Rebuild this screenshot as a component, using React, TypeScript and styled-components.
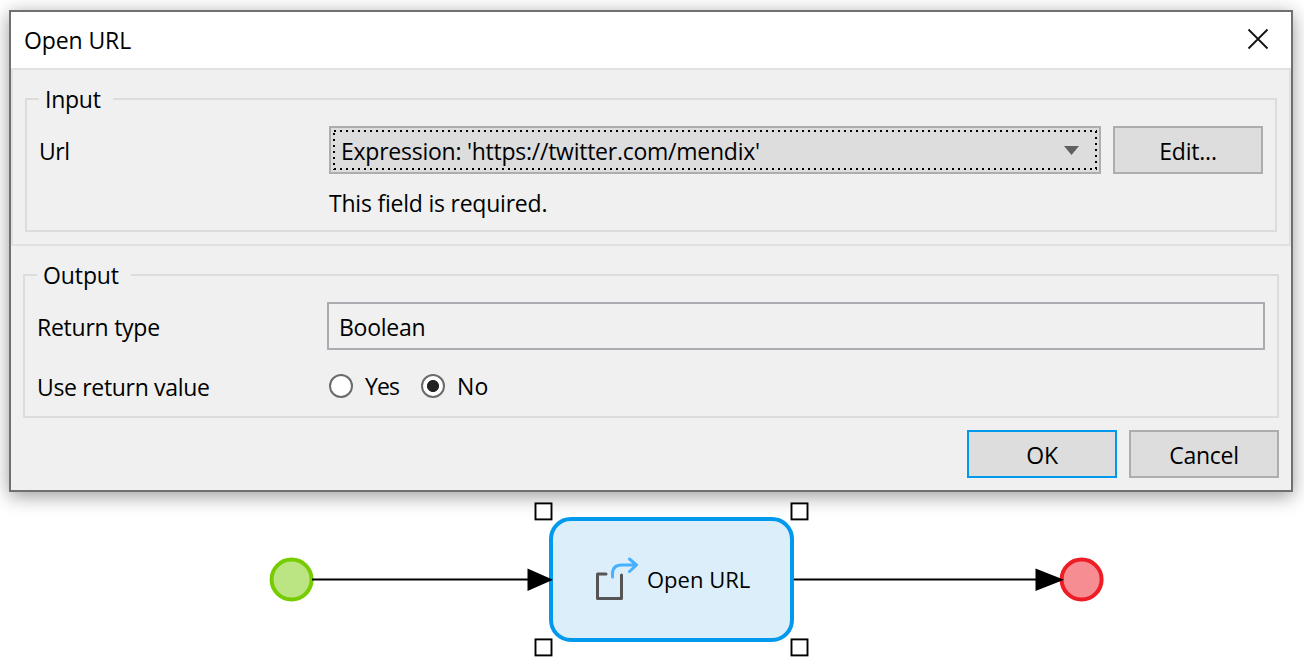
import React from 'react';
import styled, { createGlobalStyle } from 'styled-components';

const GlobalStyle = createGlobalStyle`
  *, *::before, *::after { box-sizing: border-box; }
  body { margin: 0; background: #fff; overflow: hidden; }
`;

const Page = styled.main`
  width: 1304px;
  height: 670px;
  padding-top: 10px;
  display: flex;
  flex-direction: column;
  color: #000;
  font-family: 'Open Sans', 'Segoe UI', sans-serif;
  font-size: 23px;
  line-height: 32px;
`;

const Text = styled.span<{ $track?: number }>`
  white-space: nowrap;
  letter-spacing: ${(p) => p.$track ?? -0.25}px;
`;

const Dialog = styled.section`
  width: 1284px;
  height: 482px;
  flex: none;
  margin-left: 9px;
  border: 2px solid #707070;
  background: #f0f0f0;
  box-shadow: 0 4px 18px rgba(0, 0, 0, 0.4);
`;

const TitleBar = styled.header`
  height: 56px;
  padding: 0 22px 0 13px;
  display: flex;
  align-items: center;
  justify-content: space-between;
  background: #fff;
`;

const CloseButton = styled.button`
  width: 22px;
  height: 22px;
  padding: 0;
  margin-bottom: 2px;
  border: 0;
  background: none;
  display: flex;
`;

const InputSection = styled.div`
  height: 178px;
  padding: 28px 12px 0;
  border: 2px solid #e1e1e1;
`;

const OutputSection = styled.div`
  padding: 28px 12px 0;
`;

const Group = styled.div<{ $height: number }>`
  height: ${(p) => p.$height}px;
  padding: 0 12px;
  border: 2px solid #dcdcdc;
  border-top: 0;
`;

const GroupHeader = styled.div`
  height: 28px;
  margin: 0 -12px;
  display: flex;
  align-items: flex-start;
`;

const Rule = styled.div<{ $width?: number }>`
  height: 2px;
  background: #dcdcdc;
  flex: ${(p) => (p.$width ? `0 0 ${p.$width}px` : '1')};
`;

const Legend = styled.div<{ $width: number }>`
  width: ${(p) => p.$width}px;
  padding-left: 6px;
  margin-top: -15px;
`;

const Row = styled.div<{ $gap?: number }>`
  height: 48px;
  margin-bottom: ${(p) => p.$gap ?? 0}px;
  display: flex;
  align-items: center;
`;

const Label = styled.div`
  width: 290px;
  flex: none;
  padding-top: 2px;
`;

const Button = styled.button<{ $primary?: boolean }>`
  width: 150px;
  height: 48px;
  padding: 2px 0 0;
  flex: none;
  border: 2px solid ${(p) => (p.$primary ? '#0099ee' : '#adadad')};
  background: #ddd;
  color: inherit;
  font: inherit;
`;

const dots = (dir: string, start: number) =>
  `repeating-linear-gradient(${dir}, transparent 0 ${start}px, #000 ${start}px ${start + 2}px, transparent ${start + 2}px 6px)`;

const Dropdown = styled.div`
  width: 772px;
  height: 48px;
  margin-right: 12px;
  padding: 2px;
  border: 2px solid #adadad;
  background: #ddd;
`;

const FocusFrame = styled.div`
  height: 40px;
  padding: 2px 18px 0 8px;
  display: flex;
  align-items: center;
  justify-content: space-between;
  background:
    ${dots('to right', 1)} 0 0 / 100% 2px no-repeat,
    ${dots('to right', 1)} 0 100% / 100% 2px no-repeat,
    ${dots('to bottom', 3)} 0 0 / 2px 100% no-repeat,
    ${dots('to bottom', 1)} 100% 0 / 2px 100% no-repeat;
`;

const Caret = styled.svg`
  margin-bottom: 2px;
`;

const Hint = styled.div`
  padding: 13px 0 0 290px;
`;

const ReadOnlyField = styled.div`
  width: 938px;
  height: 48px;
  padding: 7px 10px 0;
  border: 2px solid #abadb3;
`;

const Radio = styled.label`
  display: flex;
  align-items: center;
  gap: 12px;
  padding-left: 2px;
  margin-right: 20px;
`;

const RadioMark = styled.span<{ $checked?: boolean }>`
  width: 24px;
  height: 24px;
  margin-top: -1px;
  border: 2px solid #6b6b6b;
  border-radius: 50%;
  background: ${(p) =>
    p.$checked ? 'radial-gradient(circle, #222 5.6px, #fff 6.4px)' : '#fff'};
`;

const Footer = styled.footer`
  padding: 12px 12px 0 0;
  display: flex;
  justify-content: flex-end;
  gap: 12px;
`;

const Canvas = styled.div`
  position: relative;
  flex: 1;
`;

const Flow = styled.svg`
  position: absolute;
  inset: 0;
`;

const Activity = styled.div`
  position: absolute;
  left: 549px;
  top: 25px;
  width: 245px;
  height: 125px;
  padding: 0 0 0 41px;
  border: 4px solid #0099ee;
  border-radius: 22px;
  background: #dbeefa;
  display: flex;
  align-items: center;
  gap: 8px;
  font-size: 22px;
`;

const ActivityName = styled.div`
  padding-bottom: 2px;
`;

const handles = [
  [543.5, 511.4],
  [799.5, 511.4],
  [543.5, 647.4],
  [799.5, 647.4],
];

export default function App() {
  return (
    <Page>
      <GlobalStyle />
      <Dialog>
        <TitleBar>
          <Text $track={-0.1}>Open URL</Text>
          <CloseButton aria-label="Close">
            <svg width="22" height="22" viewBox="0 0 22 22">
              <path d="M1.5 1.5 20.5 20.5M20.5 1.5 1.5 20.5" stroke="#111" strokeWidth="1.8" />
            </svg>
          </CloseButton>
        </TitleBar>
        <InputSection>
          <Group $height={134}>
            <GroupHeader>
              <Rule $width={12} />
              <Legend $width={74}><Text>Input</Text></Legend>
              <Rule />
            </GroupHeader>
            <Row>
              <Label><Text $track={-0.5}>Url</Text></Label>
              <Dropdown>
                <FocusFrame>
                  <Text>Expression: 'https://twitter.com/mendix'</Text>
                  <Caret width="15" height="9" viewBox="0 0 15 9">
                    <path d="M0 0H15L7.5 9Z" fill="#606060" />
                  </Caret>
                </FocusFrame>
              </Dropdown>
              <Button><Text $track={-0.2}>Edit...</Text></Button>
            </Row>
            <Hint><Text $track={-0.22}>This field is required.</Text></Hint>
          </Group>
        </InputSection>
        <OutputSection>
          <Group $height={144}>
            <GroupHeader>
              <Rule $width={12} />
              <Legend $width={94}><Text $track={-0.1}>Output</Text></Legend>
              <Rule />
            </GroupHeader>
            <Row $gap={12}>
              <Label><Text>Return type</Text></Label>
              <ReadOnlyField><Text>Boolean</Text></ReadOnlyField>
            </Row>
            <Row>
              <Label><Text $track={-0.33}>Use return value</Text></Label>
              <Radio><RadioMark /><Text $track={-0.9}>Yes</Text></Radio>
              <Radio><RadioMark $checked /><Text $track={0.1}>No</Text></Radio>
            </Row>
          </Group>
        </OutputSection>
        <Footer>
          <Button $primary><Text>OK</Text></Button>
          <Button><Text>Cancel</Text></Button>
        </Footer>
      </Dialog>
      <Canvas>
        <Activity>
          <svg width="45" height="45" viewBox="0 0 45 45" fill="none" strokeLinecap="round" strokeLinejoin="round">
            <path d="M12 17H3.5V41.5H27.5V18" stroke="#555" strokeWidth="3" />
            <path d="M18.5 20V17Q18.5 8 27.5 8H42M35.5 2 42.5 8 35.5 14.5" stroke="#47b0ff" strokeWidth="3" />
          </svg>
          <ActivityName><Text $track={0}>Open URL</Text></ActivityName>
        </Activity>
        <Flow width="1304" height="178" viewBox="0 492 1304 178">
          <circle cx="291.6" cy="579.5" r="20" fill="#bbe582" stroke="#76cc00" strokeWidth="4" />
          <circle cx="1081.6" cy="579.5" r="20" fill="#f68d92" stroke="#ee1c25" strokeWidth="4" />
          <path d="M312 579.5H530M794 579.5H1038" stroke="#000" strokeWidth="2" />
          <path d="M527.5 568.5 553 579.7 527.5 591ZM1035.5 568.5 1064 579.7 1035.5 591Z" fill="#000" />
          {handles.map(([x, y]) => (
            <rect key={`${x},${y}`} x={x - 8} y={y - 8} width="16" height="16" fill="#fff" stroke="#000" strokeWidth="1.9" />
          ))}
        </Flow>
      </Canvas>
    </Page>
  );
}
